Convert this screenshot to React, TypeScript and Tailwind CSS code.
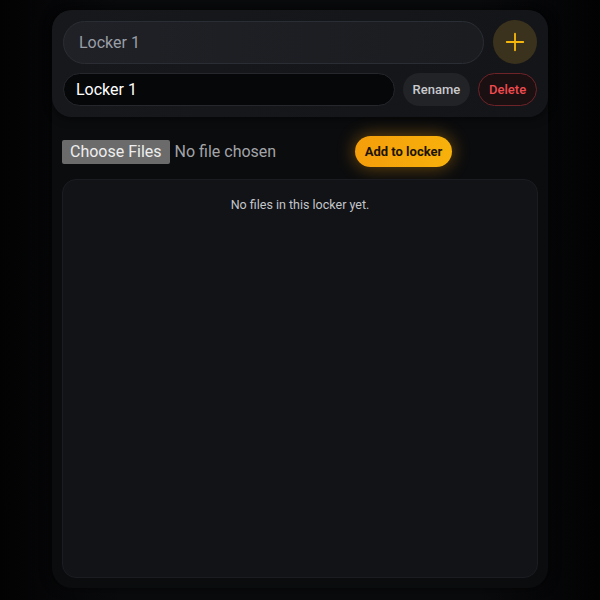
import { useState } from "react";

function PlusIcon() {
  return (
    <svg width="22" height="22" viewBox="0 0 24 24" fill="none" stroke="#f5b60d" strokeWidth="2" strokeLinecap="round">
      <path d="M12 3v18M3 12h18" />
    </svg>
  );
}

export default function App() {
  const [name, setName] = useState("Locker 1");
  const [newName, setNewName] = useState("");

  return (
    <div
      className="h-[600px] w-[600px] overflow-hidden bg-[linear-gradient(90deg,#020203_0%,#0a0b0d_20%,#0a0b0d_80%,#020203_100%)] px-[52px] pt-[10px]"
      style={{ fontFamily: "Roboto, 'Noto Sans', sans-serif" }}
    >
      <div className="flex h-[578px] flex-col rounded-[20px] bg-[#0b0c0e] shadow-[0_0_12px_rgba(0,0,0,0.6)]">
        {/* locker controls */}
        <div className="flex flex-col gap-[9px] rounded-[20px] bg-[linear-gradient(90deg,#17181c,#141519)] px-[11px] pb-[11px] pt-[10px] shadow-[0_2px_8px_rgba(0,0,0,0.5)]">
          <div className="flex items-center gap-[9px]">
            <input
              value={newName}
              onChange={(e) => setNewName(e.target.value)}
              placeholder="Locker 1"
              className="h-[43px] flex-1 rounded-full border border-[#2a2d33] bg-[linear-gradient(90deg,#1f2126,#1a1c20)] px-[15px] text-[16px] text-white outline-none placeholder:text-[#9a9ea6]"
            />
            <button
              type="button"
              className="flex h-[44px] w-[44px] items-center justify-center rounded-full bg-[#3a321c]"
            >
              <PlusIcon />
            </button>
          </div>
          <div className="flex items-center gap-[8px]">
            <input
              value={name}
              onChange={(e) => setName(e.target.value)}
              className="h-[33px] w-[333px] rounded-full border border-[#25272c] bg-[#060709] px-[12px] text-[16px] text-white outline-none"
            />
            <button
              type="button"
              className="h-[33px] w-[68px] rounded-full bg-[#222327] text-[13px] font-medium text-[#c9cacd]"
            >
              Rename
            </button>
            <button
              type="button"
              className="h-[33px] w-[59px] rounded-full border border-[#6e2328] bg-[#1a0f11] text-[13px] font-medium text-[#ef4b4f]"
            >
              Delete
            </button>
          </div>
        </div>

        {/* upload row */}
        <div className="mt-[19px] flex items-center px-[10px]">
          <label className="flex w-[293px] items-center gap-[5px] text-[16px]">
            <span className="rounded-[2px] bg-[#6b6b6b] px-[8px] py-[1px] leading-[22px] text-[#eeeeee]">
              Choose Files
            </span>
            <span className="text-[#a2a4a8]">No file chosen</span>
            <input type="file" multiple className="hidden" />
          </label>
          <button
            type="button"
            className="h-[31px] w-[97px] rounded-full bg-[linear-gradient(90deg,#f59e0b,#f8b10b)] text-[13px] font-bold text-[#1b1306] shadow-[0_0_18px_rgba(245,158,11,0.45)]"
          >
            Add to locker
          </button>
        </div>

        {/* files */}
        <div className="mx-[10px] mb-[10px] mt-[12px] flex-1 rounded-[14px] border border-[#1b1c21] bg-[#121317] pt-[16px] text-center text-[12.5px] text-[#c4c6ca]">
          No files in this locker yet.
        </div>
      </div>
    </div>
  );
}
